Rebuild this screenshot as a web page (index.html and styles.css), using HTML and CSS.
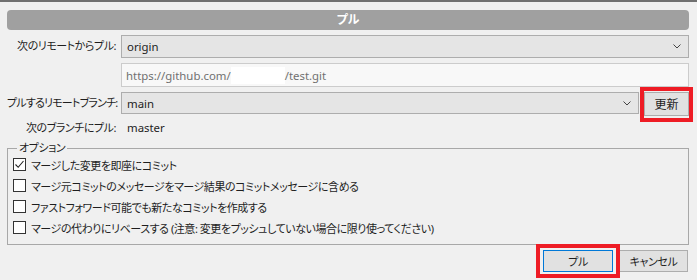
FILE: index.html
```html
<!DOCTYPE html>
<html lang="ja">
<head>
<meta charset="utf-8">
<title>プル</title>
<link rel="stylesheet" href="styles.css">
</head>
<body>
<div class="topline"></div>
<div class="dialog">
  <div class="title">プル</div>
  <div class="form">
    <label class="lbl">次のリモートからプル:</label>
    <div class="select">
      <span class="latin">origin</span>
      <svg class="chev" width="8" height="5" viewBox="0 0 8 5"><path d="M0.5 0.5 L4 4 L7.5 0.5" fill="none" stroke="#444" stroke-width="1"/></svg>
    </div>
    <span></span>
    <div class="url"><span class="latin">https://github.com/</span><span class="redact"></span><span class="latin">/test.git</span></div>
    <label class="lbl tight">プルするリモートブランチ:</label>
    <div class="rowfield">
      <div class="select short">
        <span class="latin">main</span>
        <svg class="chev" width="8" height="5" viewBox="0 0 8 5"><path d="M0.5 0.5 L4 4 L7.5 0.5" fill="none" stroke="#444" stroke-width="1"/></svg>
      </div>
      <button class="btn upd marked">更新</button>
    </div>
    <label class="lbl lbl-text">次のブランチにプル:</label>
    <div class="value latin">master</div>
  </div>
  <fieldset class="options">
    <legend>オプション</legend>
    <div class="opt"><span class="box checked"><svg width="11" height="11" viewBox="0 0 11 11"><path d="M1.5 5.5 L4.2 8.3 L9.5 2" fill="none" stroke="#222" stroke-width="1.1"/></svg></span>マージした変更を即座にコミット</div>
    <div class="opt"><span class="box"></span>マージ元コミットのメッセージをマージ結果のコミットメッセージに含める</div>
    <div class="opt"><span class="box"></span>ファストフォワード可能でも新たなコミットを作成する</div>
    <div class="opt"><span class="box"></span>マージの代わりにリベースする (注意: 変更をプッシュしていない場合に限り使ってください)</div>
  </fieldset>
  <div class="footer">
    <button class="btn ok marked2">プル</button>
    <button class="btn cancel">キャンセル</button>
  </div>
</div>
</body>
</html>
```

FILE: styles.css
```css
* { box-sizing: border-box; }
html, body { margin: 0; padding: 0; }
body {
  width: 697px;
  height: 280px;
  overflow: hidden;
  background: #f0f0f0;
  font-family: "Noto Sans", "Noto Sans CJK JP", sans-serif;
  font-feature-settings: "palt";
  font-size: 11px;
  letter-spacing: -0.45px;
  color: #1e1e1e;
}
.latin {
  font-size: 11.4px;
  letter-spacing: 0;
}
.topline {
  height: 2px;
  background: #707070;
}
.dialog {
  padding: 8px 8px 0 7px;
}
.title {
  height: 20px;
  background: #a0a0a0;
  border-radius: 4px;
  color: #fff;
  font-weight: bold;
  text-align: center;
  line-height: 20px;
  font-size: 12px;
  letter-spacing: 0;
}
.form {
  margin-top: 5px;
  display: grid;
  grid-template-columns: 110px 1fr;
  column-gap: 4px;
  row-gap: 5px;
  align-items: start;
}
.lbl {
  text-align: right;
  white-space: nowrap;
  line-height: 22px;
  padding-right: 1px;
}
.lbl.tight {
  letter-spacing: -0.8px;
}
.lbl.lbl-text {
  line-height: 14px;
}
.select {
  height: 23px;
  background: #e5e5e5;
  border: 1px solid #adadad;
  display: flex;
  align-items: center;
  justify-content: space-between;
  padding: 0 7px 0 5px;
}
.select.short {
  height: 22px;
  flex: 1;
}
.url {
  height: 24px;
  background: #f8f8f8;
  border: 1px solid #cccccc;
  display: flex;
  align-items: center;
  padding-left: 4px;
  color: #707070;
}
.redact {
  display: inline-block;
  width: 54px;
  height: 17px;
  background: #ffffff;
}
.rowfield {
  display: flex;
  gap: 5px;
  align-items: flex-start;
}
.btn {
  font: inherit;
  letter-spacing: inherit;
  color: #1e1e1e;
  background: #e1e1e1;
  border: 1px solid #adadad;
  padding: 0;
  position: relative;
}
.upd {
  width: 45px;
  height: 24px;
  font-size: 12px;
  letter-spacing: 0;
}
.marked::after {
  content: "";
  position: absolute;
  left: -5px;
  right: -5px;
  top: -6px;
  bottom: -7px;
  border: 4px solid #ee1c25;
}
.value {
  line-height: 14px;
  padding-left: 6px;
}
.options {
  margin: 6px 0 0 0;
  padding: 0 0 6px 5px;
  border: 1px solid #a8a8a8;
}
.options legend {
  padding: 0 2px;
  margin-left: 4px;
  line-height: 14px;
}
.opt {
  height: 21px;
  display: flex;
  align-items: center;
  gap: 5px;
  white-space: nowrap;
}
.opt:first-of-type { margin-top: -1px; }
.box {
  width: 13px;
  height: 13px;
  border: 1px solid #333;
  background: #fff;
  display: inline-flex;
  align-items: center;
  justify-content: center;
  flex: none;
}
.footer {
  margin-top: 5px;
  display: flex;
  justify-content: flex-end;
  gap: 6px;
  padding-right: 1px;
}
.ok {
  width: 70px;
  height: 22px;
  border: 1px solid #0078d7;
}
.cancel {
  width: 69px;
  height: 22px;
}
.marked2::after {
  content: "";
  position: absolute;
  left: -8px;
  right: -8px;
  top: -7px;
  bottom: -7px;
  border: 4px solid #ee1c25;
  z-index: 2;
}
```
